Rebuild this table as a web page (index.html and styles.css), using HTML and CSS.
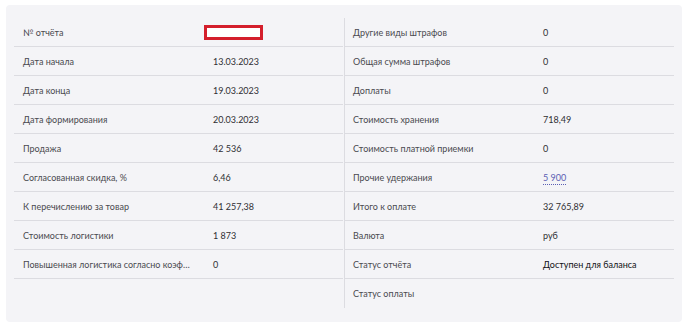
FILE: index.html
```html
<!DOCTYPE html>
<html lang="ru">
<head>
<meta charset="utf-8">
<link rel="stylesheet" href="styles.css">
</head>
<body>
<div class="panel">
  <div class="grid">
    <div class="col col-left">
      <div class="row"><span class="label">№ отчёта</span><span class="value"><span class="redact"></span></span></div>
      <div class="row"><span class="label">Дата начала</span><span class="value">13.03.2023</span></div>
      <div class="row"><span class="label">Дата конца</span><span class="value">19.03.2023</span></div>
      <div class="row"><span class="label">Дата формирования</span><span class="value">20.03.2023</span></div>
      <div class="row"><span class="label">Продажа</span><span class="value">42 536</span></div>
      <div class="row"><span class="label">Согласованная скидка, %</span><span class="value">6,46</span></div>
      <div class="row"><span class="label">К перечислению за товар</span><span class="value">41 257,38</span></div>
      <div class="row"><span class="label">Стоимость логистики</span><span class="value">1 873</span></div>
      <div class="row"><span class="label" title="Повышенная логистика согласно коэффициенту территориального распределения">Повышенная логистика согласно коэф…</span><span class="value">0</span></div>
    </div>
    <div class="col col-right">
      <div class="row"><span class="label">Другие виды штрафов</span><span class="value">0</span></div>
      <div class="row"><span class="label">Общая сумма штрафов</span><span class="value">0</span></div>
      <div class="row"><span class="label">Доплаты</span><span class="value">0</span></div>
      <div class="row"><span class="label">Стоимость хранения</span><span class="value">718,49</span></div>
      <div class="row"><span class="label">Стоимость платной приемки</span><span class="value">0</span></div>
      <div class="row"><span class="label">Прочие удержания</span><span class="value"><span class="link">5 900</span></span></div>
      <div class="row"><span class="label">Итого к оплате</span><span class="value">32 765,89</span></div>
      <div class="row"><span class="label">Валюта</span><span class="value">руб</span></div>
      <div class="row"><span class="label">Статус отчёта</span><span class="value strong">Доступен для баланса</span></div>
      <div class="row last"><span class="label">Статус оплаты</span><span class="value"></span></div>
    </div>
  </div>
</div>
</body>
</html>
```

FILE: styles.css
```css
* { box-sizing: border-box; }
html, body { margin: 0; padding: 0; background: #ffffff; }
body {
  font-family: Lato, "Noto Sans", sans-serif;
  font-size: 9px;
  color: #3a3a3a;
}
.panel {
  margin: 5px 0 0 6px;
  width: 676px;
  height: 317px;
  background: #f4f4f7;
  border-radius: 4px;
  padding: 13px 8px 14px 8px;
}
.grid {
  display: grid;
  grid-template-columns: 331px 329px;
  height: 290px;
}
.col-left {
  border-right: 1px solid #dcdce1;
  padding-right: 1px;
}
.row {
  display: grid;
  grid-template-columns: 199px 1fr;
  align-items: center;
  height: 29px;
  border-bottom: 1px solid #dcdce1;
}
.row.last { border-bottom: none; }
.col-right .row { grid-template-columns: 198px 1fr; }
.label {
  padding-left: 9px;
  padding-right: 8px;
  color: #4a4a4f;
  white-space: nowrap;
  overflow: hidden;
}
.col-right .label { padding-left: 8px; }
.value { color: #2f2f33; white-space: nowrap; }
.value.strong { color: #111114; }
.redact {
  display: inline-block;
  width: 59px;
  height: 15px;
  margin-left: -9px;
  margin-top: 1px;
  background: #ffffff;
  border: 3px solid #d41f2c;
  vertical-align: middle;
}
.link {
  color: #5b5fb3;
  border-bottom: 1px dotted #5b5fb3;
  padding-bottom: 1px;
}
```
